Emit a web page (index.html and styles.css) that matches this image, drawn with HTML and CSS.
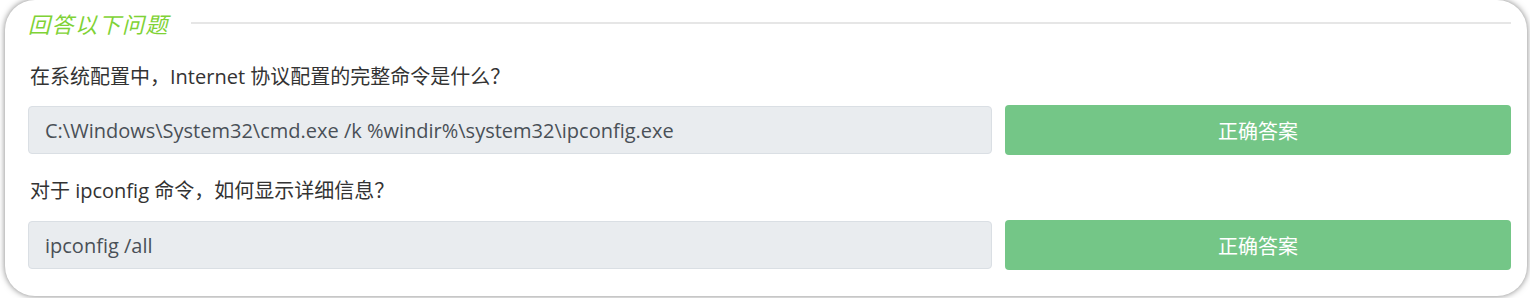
FILE: index.html
```html
<!DOCTYPE html>
<html lang="zh-CN">
<head>
  <meta charset="UTF-8">
  <meta name="viewport" content="width=device-width, initial-scale=1.0">
  <title>回答以下问题</title>
  <link rel="stylesheet" href="styles.css">
</head>
<body>

  <div class="quiz-card">
    <div class="quiz-title">
      <h2>回答以下问题</h2>
      <span class="title-rule"></span>
    </div>

    <div class="question">
      <p class="question-text">在系统配置中，Internet 协议配置的完整命令是什么？</p>
      <div class="answer-row">
        <input class="answer-input" type="text" value="C:\Windows\System32\cmd.exe /k %windir%\system32\ipconfig.exe" readonly>
        <button class="answer-button">正确答案</button>
      </div>
    </div>

    <div class="question">
      <p class="question-text">对于 ipconfig 命令，如何显示详细信息？</p>
      <div class="answer-row">
        <input class="answer-input" type="text" value="ipconfig /all" readonly>
        <button class="answer-button">正确答案</button>
      </div>
    </div>
  </div>

</body>
</html>
```

FILE: styles.css
```css
body {
  margin: 0;
  padding: 0 3px 2px 5px;
  background-color: #ffffff;
  font-family: "Open Sans", "Noto Sans CJK SC", sans-serif;
}

.quiz-card {
  background-color: #fff;
  border-radius: 30px;
  box-shadow: 0 0 6px rgba(0, 0, 0, 0.5);
  padding: 9px 16px 26px 23px;
}

.quiz-title {
  display: flex;
  align-items: center;
  gap: 22px;
  height: 30px;
}

.quiz-title h2 {
  margin: 0;
  font-size: 22px;
  font-weight: normal;
  font-style: italic;
  color: #7fd236;
  line-height: 30px;
  letter-spacing: 1.5px;
}

.title-rule {
  flex: 1;
  height: 2px;
  background-color: #e6e6e6;
  margin-top: -2px;
}

.question-text {
  margin: 23px 0 13px 2px;
  font-size: 20px;
  line-height: 30px;
  color: #333;
}

.question + .question .question-text {
  margin-top: 21px;
  margin-bottom: 14px;
}

.answer-row {
  display: flex;
  align-items: center;
  gap: 13px;
  height: 50px;
}

.answer-input {
  flex: 0 0 964px;
  box-sizing: border-box;
  height: 48px;
  padding: 0 16px;
  font-family: inherit;
  font-size: 20px;
  color: #495057;
  background-color: #e9ecef;
  border: 1px solid #dadfe4;
  border-radius: 4px;
  outline: none;
}

.answer-button {
  flex: 1;
  height: 50px;
  border: none;
  border-radius: 4px;
  background-color: #74c687;
  color: white;
  font-family: inherit;
  font-size: 20px;
  cursor: pointer;
}
```
